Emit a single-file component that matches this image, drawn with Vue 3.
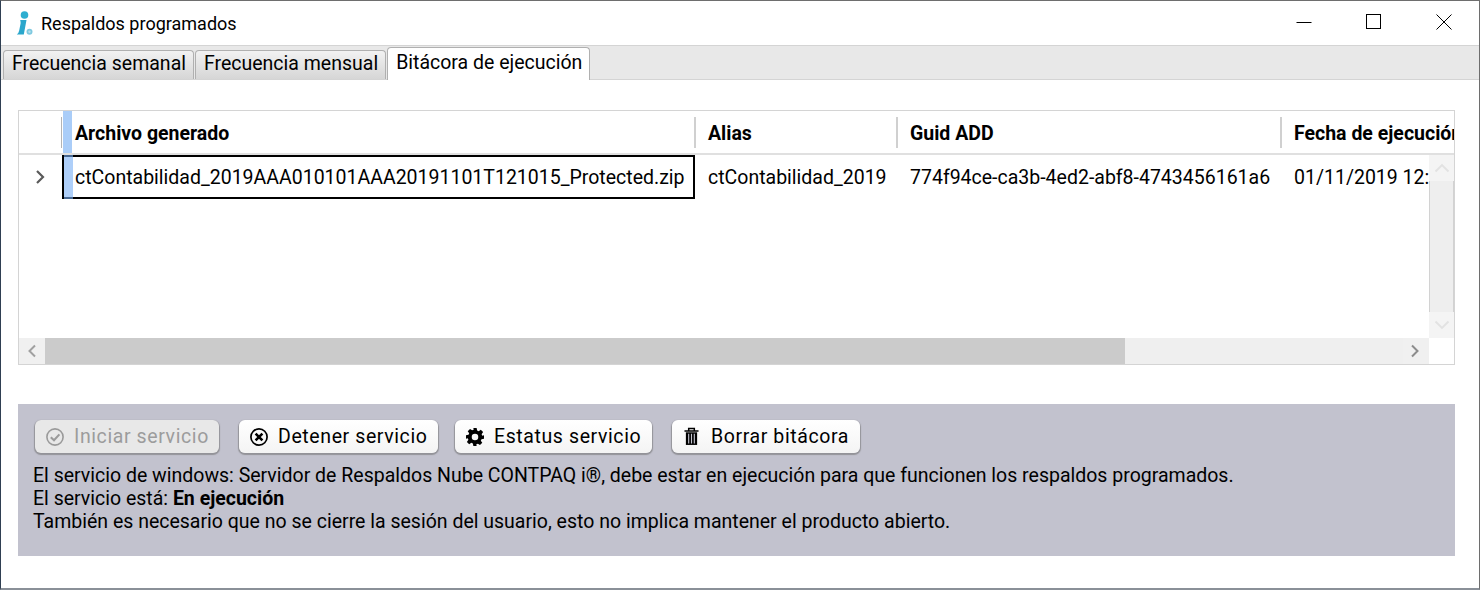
<script setup>
const tabs = [
  { label: 'Frecuencia semanal', active: false },
  { label: 'Frecuencia mensual', active: false },
  { label: 'Bitácora de ejecución', active: true },
]
</script>

<template>
  <div class="window">
    <header class="titlebar">
      <svg class="logo" width="18" height="26" viewBox="0 0 18 26">
        <circle cx="8.5" cy="5" r="3.8" fill="#2eaed0" />
        <path d="M4.2 10h6.3L7.8 24.5H0.8Q2.6 23.5 3.2 20.5L4.6 13.5Q4.8 12 4.2 10Z" fill="#2aa7cc" />
        <circle cx="13.5" cy="21.7" r="3" fill="#7fc9e0" />
        <circle cx="13.5" cy="21.7" r="1.2" fill="#b8e2ee" />
      </svg>
      <span class="title">Respaldos programados</span>
      <div class="controls">
        <span class="ctl"><svg width="16" height="16" viewBox="0 0 16 16"><path d="M0.5 8.5h15" stroke="#000" fill="none" /></svg></span>
        <span class="ctl"><svg width="16" height="16" viewBox="0 0 16 16"><rect x="0.5" y="0.5" width="14" height="14" stroke="#000" fill="none" /></svg></span>
        <span class="ctl"><svg width="16" height="16" viewBox="0 0 16 16"><path d="M0.5 0.5l15 15M15.5 0.5l-15 15" stroke="#000" fill="none" /></svg></span>
      </div>
    </header>

    <nav class="tabstrip">
      <div v-for="t in tabs" :key="t.label" class="tab" :class="{ active: t.active }">{{ t.label }}</div>
    </nav>

    <main class="content">
      <section class="grid">
        <div class="head">
          <div class="h-gutter"></div>
          <div class="hc c1"><span class="mark"></span>Archivo generado</div>
          <div class="hc c2">Alias</div>
          <div class="hc c3">Guid ADD</div>
          <div class="hc c4">Fecha de ejecución</div>
        </div>
        <div class="middle">
          <div class="rows">
            <div class="row">
              <div class="r-gutter">
                <svg width="10" height="14" viewBox="0 0 10 14"><path d="M2 1 8 7l-6 6" stroke="#5a5a5a" stroke-width="2.2" fill="none" /></svg>
              </div>
              <div class="cell c1 focus">ctContabilidad_2019AAA010101AAA20191101T121015_Protected.zip</div>
              <div class="cell c2">ctContabilidad_2019</div>
              <div class="cell c3">774f94ce-ca3b-4ed2-abf8-4743456161a6</div>
              <div class="cell c4">01/11/2019 12:10:15</div>
            </div>
          </div>
          <div class="vscroll">
            <div class="arrow">
              <svg width="16" height="10" viewBox="0 0 16 10"><path d="M1.5 8.5 8 2l6.5 6.5" stroke="#e2e2e2" stroke-width="1.8" fill="none" /></svg>
            </div>
            <div class="vthumb"></div>
            <div class="arrow">
              <svg width="16" height="10" viewBox="0 0 16 10"><path d="M1.5 1.5 8 8l6.5-6.5" stroke="#e2e2e2" stroke-width="1.8" fill="none" /></svg>
            </div>
          </div>
        </div>
        <div class="bottom">
          <div class="hscroll">
            <div class="harrow left">
              <svg width="10" height="14" viewBox="0 0 10 14"><path d="M8 1.5 2.5 7 8 12.5" stroke="#a0a0a0" stroke-width="2" fill="none" /></svg>
            </div>
            <div class="hthumb"></div>
            <div class="harrow right">
              <svg width="10" height="14" viewBox="0 0 10 14"><path d="M2 1.5 7.5 7 2 12.5" stroke="#8c8c8c" stroke-width="2" fill="none" /></svg>
            </div>
          </div>
          <div class="corner"></div>
        </div>
      </section>

      <section class="panel">
        <div class="buttons">
          <button class="btn disabled" disabled>
            <svg width="18" height="18" viewBox="0 0 18 18"><circle cx="9" cy="9" r="8.1" stroke="#9a9a9a" stroke-width="1.6" fill="none" /><path d="M4.8 9.2 8 12.2 13.4 6.4" stroke="#9a9a9a" stroke-width="2.1" fill="none" /></svg>
            Iniciar servicio
          </button>
          <button class="btn b2">
            <svg width="18" height="18" viewBox="0 0 18 18"><circle cx="9" cy="9" r="8.1" stroke="#000" stroke-width="1.7" fill="none" /><path d="M5.6 5.6l6.8 6.8M12.4 5.6l-6.8 6.8" stroke="#000" stroke-width="2.6" fill="none" /></svg>
            Detener servicio
          </button>
          <button class="btn b3">
            <svg width="18" height="18" viewBox="1 1 22 22"><path fill="#000" fill-rule="evenodd" d="M10 1h4l.6 3.1 1.9.8 2.6-1.8 2.8 2.8-1.8 2.6.8 1.9L23 10v4l-3.1.6-.8 1.9 1.8 2.6-2.8 2.8-2.6-1.8-1.9.8L14 23h-4l-.6-3.1-1.9-.8-2.6 1.8-2.8-2.8 1.8-2.6-.8-1.9L1 14v-4l3.1-.6.8-1.9-1.8-2.6 2.8-2.8 2.6 1.8 1.9-.8ZM12 8a4 4 0 1 0 0 8 4 4 0 0 0 0-8Z" /></svg>
            Estatus servicio
          </button>
          <button class="btn b4">
            <svg width="15" height="19" viewBox="0 0 16 19"><path d="M0.5 3.5h15M5 3.5V1h6v2.5" stroke="#000" stroke-width="1.6" fill="none" /><path d="M2 5h12v13.5H2Z" fill="#000" /><path d="M5 6.5v10.5M8 6.5v10.5M11 6.5v10.5" stroke="#c4c4d0" stroke-width="1.2" /></svg>
            Borrar bitácora
          </button>
        </div>
        <div class="msg">
          <p>El servicio de windows: Servidor de Respaldos Nube CONTPAQ i®, debe estar en ejecución para que funcionen los respaldos programados.</p>
          <p>El servicio está: <b>En ejecución</b></p>
          <p>También es necesario que no se cierre la sesión del usuario, esto no implica mantener el producto abierto.</p>
        </div>
      </section>
    </main>
  </div>
</template>

<style>
html, body { margin: 0; background: #fff; }
</style>

<style scoped>
.window {
  width: 1480px;
  height: 590px;
  box-sizing: border-box;
  border: 1px solid #6e6e6e;
  border-left-color: #2f3f52;
  border-bottom-color: #8a9098;
  border-bottom-width: 2px;
  background: #fff;
  font-family: Roboto, sans-serif;
  font-size: 19.5px;
  color: #000;
  display: flex;
  flex-direction: column;
  overflow: hidden;
}
.titlebar {
  height: 44px;
  flex: none;
  display: flex;
  align-items: center;
  padding-left: 15px;
}
.logo { margin-right: 7px; margin-top: -1px; }
.title { font-size: 18px; flex: 1; }
.controls { display: flex; align-items: center; margin-right: 0; }
.ctl {
  width: 70px;
  display: flex;
  justify-content: center;
  margin-top: -2px;
}
.tabstrip {
  height: 33px;
  flex: none;
  background: #e8e8e8;
  border-top: 1px solid #d4d4d4;
  border-bottom: 1px solid #d4d4d4;
  display: flex;
  align-items: flex-end;
  padding-left: 2px;
  gap: 1px;
}
.tab {
  height: 29px;
  line-height: 25px;
  padding: 0 7px 0 8px;
  box-sizing: border-box;
  border: 1px solid #b0b0b0;
  border-bottom: 0;
  border-radius: 4px 4px 0 0;
  background: linear-gradient(#f2f2f2, #d6d6d6);
  white-space: nowrap;
}
.tab.active {
  height: 33px;
  line-height: 29px;
  margin-bottom: -1px;
  background: #fff;
}
.content {
  flex: 1;
  display: flex;
  flex-direction: column;
  padding: 30px 24px 0 17px;
}
.grid {
  height: 255px;
  box-sizing: border-box;
  border: 1px solid #d4d4d4;
  display: flex;
  flex-direction: column;
  overflow: hidden;
  flex: none;
}
.head {
  height: 44px;
  flex: none;
  display: flex;
  border-bottom: 2px solid #e0e0e0;
  box-sizing: border-box;
  font-weight: 700;
  white-space: nowrap;
  overflow: hidden;
}
.h-gutter { width: 44px; flex: none; position: relative; }
.h-gutter::after {
  content: '';
  position: absolute;
  right: 1px;
  top: 6px;
  bottom: 5px;
  width: 1px;
  background: #b4b4b4;
}
.hc {
  flex: none;
  box-sizing: border-box;
  height: 42px;
  line-height: 46px;
  padding-left: 12px;
  position: relative;
}
.hc::after {
  content: '';
  position: absolute;
  right: 0;
  top: 6px;
  bottom: 5px;
  width: 2px;
  background: #d0d0d0;
}
.hc.c4::after { display: none; }
.mark {
  position: absolute;
  left: 0;
  top: 0;
  bottom: 0;
  width: 9px;
  background: #aacdf8;
}
.c1 { width: 633px; }
.c2 { width: 202px; }
.c3 { width: 384px; }
.c4 { width: 200px; }
.middle { flex: 1; display: flex; min-height: 0; }
.rows { flex: 1; min-width: 0; overflow: hidden; }
.row { display: flex; height: 44px; white-space: nowrap; }
.r-gutter {
  width: 44px;
  flex: none;
  display: flex;
  align-items: center;
  justify-content: center;
  padding-right: 3px;
  box-sizing: border-box;
}
.cell {
  flex: none;
  box-sizing: border-box;
  line-height: 46px;
  padding-left: 12px;
}
.cell.focus {
  position: relative;
  width: 633px;
  margin-right: 1px;
  margin-left: -1px;
  padding-left: 11px;
  border: 2px solid #000;
  line-height: 42px;
  height: 44px;
  background: #fff;
}
.cell.focus::before {
  content: '';
  position: absolute;
  left: 0;
  top: -2px;
  bottom: -2px;
  width: 9px;
  background: rgba(120, 175, 245, 0.6);
}
.vscroll {
  width: 25px;
  flex: none;
  background: #efefef;
  display: flex;
  flex-direction: column;
}
.arrow {
  height: 26px;
  flex: none;
  display: flex;
  align-items: center;
  justify-content: center;
  background: #f4f4f4;
}
.vthumb {
  flex: 1;
  border-left: 1px solid #d2d2d2;
  border-right: 1px solid #d2d2d2;
  background: #eeeeee;
}
.bottom { height: 26px; flex: none; display: flex; }
.hscroll { flex: 1; display: flex; background: #efefef; }
.corner { width: 25px; flex: none; background: #fff; }
.harrow {
  width: 26px;
  flex: none;
  display: flex;
  align-items: center;
  justify-content: center;
  background: #f0f0f0;
}
.hthumb { width: 1080px; flex: none; background: #cbcbcb; }
.harrow.right { margin-left: auto; padding-right: 2px; box-sizing: border-box; }
.panel {
  margin-top: 39px;
  height: 152px;
  flex: none;
  background: #c2c2ce;
  box-sizing: border-box;
  padding: 16px 17px 0 15px;
}
.buttons { display: flex; align-items: flex-start; padding-left: 2px; }
.btn {
  height: 33px;
  box-sizing: border-box;
  border: 0;
  border-radius: 6px;
  background: linear-gradient(#fff, #f4f4f4);
  box-shadow: 0 1px 1px 1px rgba(110, 110, 110, 0.55);
  font: 400 19.5px Roboto, sans-serif;
  letter-spacing: 0.6px;
  color: #000;
  display: flex;
  align-items: center;
  gap: 10px;
  padding: 0 0 0 11px;
  white-space: nowrap;
}
.btn svg { flex: none; }
.btn.disabled { background: #e8e8e8; color: #9c9c9c; width: 184px; margin-right: 20px; }
.b2 { width: 199px; margin-right: 17px; }
.b3 { width: 197px; margin-right: 20px; }
.b4 { width: 188px; gap: 12px; padding-left: 12px; }
.msg { margin-top: 11px; line-height: 23px; }
.msg p { margin: 0; }
</style>
